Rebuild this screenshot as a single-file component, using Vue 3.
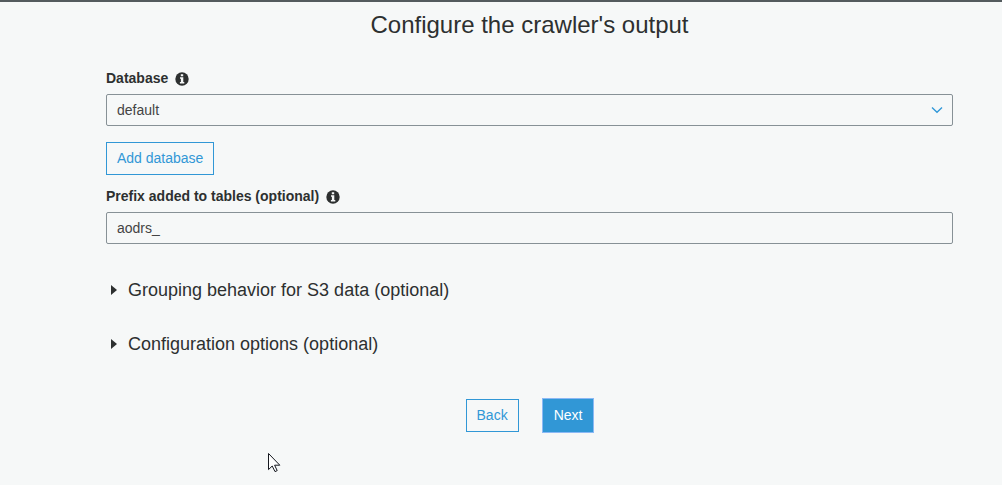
<script setup>
import { ref } from 'vue'

const database = ref('default')
const prefix = ref('aodrs_')
const sections = [
  'Grouping behavior for S3 data (optional)',
  'Configuration options (optional)',
]
</script>

<template>
  <main class="page">
    <h1 class="title">Configure the crawler's output</h1>

    <form class="form" @submit.prevent>
      <div class="field">
        <div class="label-row">
          <label for="database">Database</label>
          <svg class="info" viewBox="0 0 14 14" aria-hidden="true">
            <circle cx="7" cy="7" r="6.7" fill="#2d3030" />
            <path d="M5.8 2.2h2.4v2H5.8zM5 5.3h3.3v4.6h1v1.5H4.9V9.9h1V6.8H5z" fill="#f6f8f8" />
          </svg>
        </div>
        <div class="select-wrap">
          <select id="database" v-model="database" class="control">
            <option value="default">default</option>
          </select>
          <svg class="chevron" viewBox="0 0 12 8" aria-hidden="true">
            <path d="M1 1.5 6 6.3 11 1.5" fill="none" stroke="#2f97d8" stroke-width="1.3" />
          </svg>
        </div>
      </div>

      <button type="button" class="btn add">Add database</button>

      <div class="field">
        <div class="label-row">
          <label for="prefix">Prefix added to tables (optional)</label>
          <svg class="info" viewBox="0 0 14 14" aria-hidden="true">
            <circle cx="7" cy="7" r="6.7" fill="#2d3030" />
            <path d="M5.8 2.2h2.4v2H5.8zM5 5.3h3.3v4.6h1v1.5H4.9V9.9h1V6.8H5z" fill="#f6f8f8" />
          </svg>
        </div>
        <input id="prefix" v-model="prefix" type="text" class="control" />
      </div>

      <div class="sections">
        <button v-for="name in sections" :key="name" type="button" class="section" aria-expanded="false">
          <svg class="caret" viewBox="0 0 6 10" aria-hidden="true">
            <path d="M0 0 6 5 0 10z" fill="#2d3030" />
          </svg>
          {{ name }}
        </button>
      </div>

      <div class="actions">
        <button type="button" class="btn">Back</button>
        <button type="submit" class="btn primary">Next</button>
      </div>
    </form>

    <svg class="pointer" viewBox="0 0 13 20" aria-hidden="true">
      <path d="M.5.5V16.6L4.2 13 7 18.6 9.2 17.6 6.6 12.2H11.8z" fill="#fff" stroke="#15181f" stroke-width="1" />
    </svg>
  </main>
</template>

<style>
body {
  background: #f6f8f8;
}
</style>

<style scoped>
.page {
  box-sizing: border-box;
  min-height: 100vh;
  padding: 7px 49px 48px 106px;
  border-top: 2px solid #545b5e;
  background: #f6f8f8;
  color: #2d3030;
  font-family: "Liberation Sans", Arial, sans-serif;
  font-size: 14px;
  line-height: 20px;
}

.title {
  margin: 0 0 27px;
  font-size: 24px;
  font-weight: 400;
  line-height: 32px;
  text-align: center;
}

.form {
  display: flex;
  flex-direction: column;
}

.field {
  display: flex;
  flex-direction: column;
  gap: 6px;
}

.label-row {
  display: flex;
  align-items: center;
  gap: 7px;
  font-weight: 700;
}

.info {
  width: 14px;
  height: 14px;
  margin-top: 2px;
}

.select-wrap {
  display: grid;
  align-items: center;
}

.select-wrap > * {
  grid-area: 1 / 1;
}

.control {
  box-sizing: border-box;
  width: 100%;
  height: 32px;
  margin: 0;
  padding: 0 10px;
  border: 1px solid #879196;
  border-radius: 2px;
  outline: none;
  appearance: none;
  background: transparent;
  color: #444;
  font: inherit;
}

.chevron {
  justify-self: end;
  width: 12px;
  height: 8px;
  margin-right: 10px;
  pointer-events: none;
}

.btn {
  padding: 5px 10px 6px;
  border: 1px solid #3197d6;
  background: transparent;
  color: #3197d6;
  font: inherit;
}

.add {
  align-self: flex-start;
  margin: 16px 0 11px;
}

.primary {
  background: #3197d6;
  color: #fff;
  outline: 1px solid #8bb9f5;
}

.sections {
  display: flex;
  flex-direction: column;
  align-items: flex-start;
  gap: 30px;
  margin: 34px 0 43px;
}

.section {
  display: flex;
  align-items: center;
  gap: 11px;
  padding: 0 0 0 5px;
  border: 0;
  background: none;
  color: inherit;
  font: inherit;
  font-size: 18px;
  line-height: 24px;
}

.caret {
  width: 6px;
  height: 10px;
}

.actions {
  display: flex;
  justify-content: center;
  gap: 24px;
}

.pointer {
  position: absolute;
  top: 453px;
  left: 268px;
  width: 13px;
  height: 20px;
}
</style>
